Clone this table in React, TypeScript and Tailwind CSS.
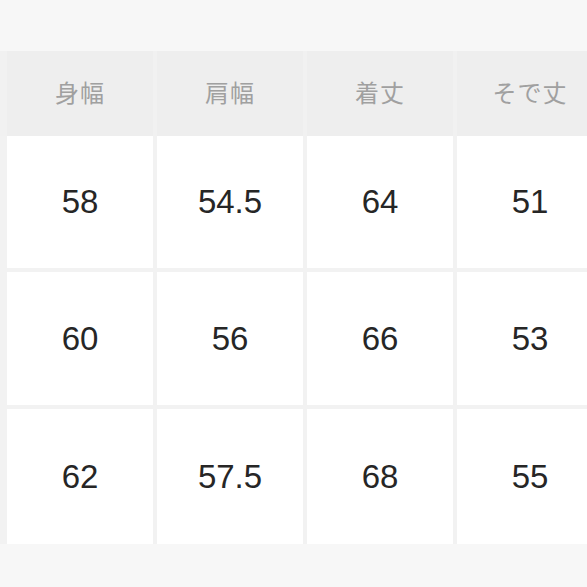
import React from "react";

const headers = ["身幅", "肩幅", "着丈", "そで丈"];
const rows = [
  { h: "h-[132px]", v: ["58", "54.5", "64", "51"] },
  { h: "h-[133px]", v: ["60", "56", "66", "53"] },
  { h: "h-[135px]", v: ["62", "57.5", "68", "55"] },
];

export default function App() {
  return (
    <div className="w-[587px] h-[587px] overflow-hidden bg-[#f7f7f7]">
      <div className="h-[51px] bg-[#f7f7f7]" />
      <div className="h-[85px] bg-[#f1f1f1] pl-[7px] flex gap-[4px] w-[800px]">
        {headers.map((t) => (
          <div
            key={t}
            className="w-[146px] shrink-0 h-full bg-[#eeeeee] flex items-center justify-center pb-[4px] text-[24px] text-[#a0a0a0] [font-family:'Noto_Sans_CJK_JP',sans-serif] tracking-[1px]"
          >
            {t}
          </div>
        ))}
      </div>
      <div className="bg-[#f2f2f2] pl-[7px] flex flex-col gap-[4px] w-[800px]">
        {rows.map((r, i) => (
          <div key={i} className={`${r.h} flex gap-[4px]`}>
            {r.v.map((v, j) => (
              <div
                key={j}
                className="w-[146px] shrink-0 h-full bg-white flex items-center justify-center text-[33px] text-[#262626] [font-family:'Liberation_Sans',Arial,sans-serif]"
              >
                {v}
              </div>
            ))}
          </div>
        ))}
      </div>
    </div>
  );
}
